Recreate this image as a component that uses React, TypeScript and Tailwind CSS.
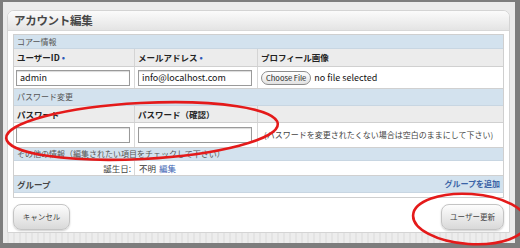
export default function App() {
  const font = "font-['Noto_Sans_CJK_JP','Liberation_Sans',sans-serif]"

  return (
    <div className={`relative h-[248px] w-[520px] overflow-hidden bg-[#7d7d7d] pl-[3px] pr-[5px] pt-[2px] pb-[5px] ${font}`}>
      <div className="h-full w-full bg-[#ebebeb] pl-[4px] pr-[5px] pt-[8px]">
        <div className="h-[223px] rounded-t-[7px] border border-[#d4d4d4] bg-white">
          {/* title bar */}
          <div className="flex h-[20px] items-center rounded-t-[6px] border-b border-[#d8d8d8] bg-gradient-to-b from-[#fbfbfb] to-[#e4e4e4] pl-[6px]">
            <h1 className="text-[11.5px] font-semibold leading-none tracking-[-0.3px] text-[#474747]">アカウント編集</h1>
          </div>

          <div className="px-[5px] pt-[3px]">
            <div className="border border-[#cfcfcf] text-[#222]">
              <Section h="h-[14px]">コアー情報</Section>
              <div className="grid h-[18px] grid-cols-[121px_123px_1fr] border-b border-[#d0d0d0] bg-[#ececec]">
                <HeadCell>
                  ユーザーID <span className="text-[#2c59b8]">•</span>
                </HeadCell>
                <HeadCell>
                  メールアドレス <span className="text-[#2c59b8]">•</span>
                </HeadCell>
                <HeadCell last>プロフィール画像</HeadCell>
              </div>
              <div className="grid h-[22px] grid-cols-[121px_123px_1fr] border-b border-[#d0d0d0]">
                <div className="flex items-center border-r border-[#d8d8d8] pl-[2px]">
                  <TextBox value="admin" />
                </div>
                <div className="flex items-center border-r border-[#d8d8d8] pl-[3px]">
                  <TextBox value="info@localhost.com" />
                </div>
                <div className="flex items-center gap-[3px] pl-[3px]">
                  <span className="rounded-full border border-[#8d8d8d] bg-gradient-to-b from-white to-[#e2e2e2] px-[4px] text-[7.5px] leading-[12px] text-[#222]">
                    Choose File
                  </span>
                  <span className="text-[9px] text-[#111]">no file selected</span>
                </div>
              </div>

              <Section h="h-[17px]">パスワード変更</Section>
              <div className="grid h-[17px] grid-cols-[121px_123px_1fr] border-b border-[#d0d0d0] bg-[#ececec]">
                <HeadCell>パスワード</HeadCell>
                <HeadCell>パスワード（確認）</HeadCell>
                <div />
              </div>
              <div className="grid h-[25px] grid-cols-[121px_123px_1fr] border-b border-[#d0d0d0]">
                <div className="flex items-center border-r border-[#d8d8d8] pl-[2px]">
                  <TextBox value="" />
                </div>
                <div className="flex items-center border-r border-[#d8d8d8] pl-[3px]">
                  <TextBox value="" />
                </div>
                <div className="flex items-center whitespace-nowrap pl-[6px] text-[8px] text-[#444]">
                  (パスワードを変更されたくない場合は空白のままにして下さい)
                </div>
              </div>

              <Section h="h-[13px]">その他の情報（編集されたい項目をチェックして下さい）</Section>
              <div className="grid h-[15px] grid-cols-[121px_1fr] border-b border-[#d0d0d0] text-[8.5px]">
                <div className="flex items-center justify-end border-r border-[#d8d8d8] pr-[3px] text-[#444]">誕生日:</div>
                <div className="flex items-center gap-[3px] pl-[4px] text-[#333]">
                  不明 <span className="text-[#3a63b3]">編集</span>
                </div>
              </div>

              <div className="flex h-[17px] items-center justify-between border-b border-[#c8d6e2] bg-[#d3e2ee] px-[3px]">
                <span className="text-[8.5px] font-bold text-[#444]">グループ</span>
                <span className="text-[8px] font-bold text-[#3a63a6]">グループを追加</span>
              </div>
              <div className="h-[4px]" />
            </div>

            <div className="flex justify-between pt-[6px]">
              <Btn w="w-[57px]">キャンセル</Btn>
              <Btn w="w-[63px]">ユーザー更新</Btn>
            </div>
          </div>
        </div>
        <div className="h-[10px] bg-[repeating-linear-gradient(90deg,#e4e4e4_0px,#e4e4e4_2px,#ededed_2px,#ededed_6px)]" />
      </div>

      {/* red annotations */}
      <svg className="pointer-events-none absolute left-0 top-0" width="520" height="248" viewBox="0 0 520 248">
        <ellipse cx="142" cy="131" rx="136" ry="28" transform="rotate(-3 142 131)" fill="none" stroke="#e41a1a" strokeWidth="2.6" />
        <ellipse cx="470" cy="219" rx="57" ry="25" transform="rotate(4 470 219)" fill="none" stroke="#e41a1a" strokeWidth="2.6" />
      </svg>
    </div>
  )
}

function Section({ h, children }: { h: string; children: React.ReactNode }) {
  return (
    <div className={`flex ${h} items-center border-b border-[#c8d6e2] bg-[#d3e2ee] pl-[3px] text-[8px] text-[#555]`}>
      {children}
    </div>
  )
}

function HeadCell({ children, last }: { children: React.ReactNode; last?: boolean }) {
  return (
    <div className={`flex items-center pl-[3px] text-[8.5px] font-bold text-[#222] ${last ? "" : "border-r border-[#d4d4d4]"}`}>
      <span>{children}</span>
    </div>
  )
}

function TextBox({ value }: { value: string }) {
  return (
    <div className="flex h-[16px] w-[114px] items-center border border-[#9a9a9a] bg-white pl-[3px] text-[9px] text-[#111] shadow-[inset_0_1px_1px_rgba(0,0,0,0.15)]">
      {value}
    </div>
  )
}

function Btn({ w, children }: { w: string; children: React.ReactNode }) {
  return (
    <div className={`flex h-[26px] ${w} items-center justify-center rounded-[8px] border border-[#c4c4c4] bg-gradient-to-b from-[#fdfdfd] to-[#d9d9d9] text-[7.5px] text-[#444] shadow-[0_1px_2px_rgba(0,0,0,0.2)]`}>
      {children}
    </div>
  )
}
